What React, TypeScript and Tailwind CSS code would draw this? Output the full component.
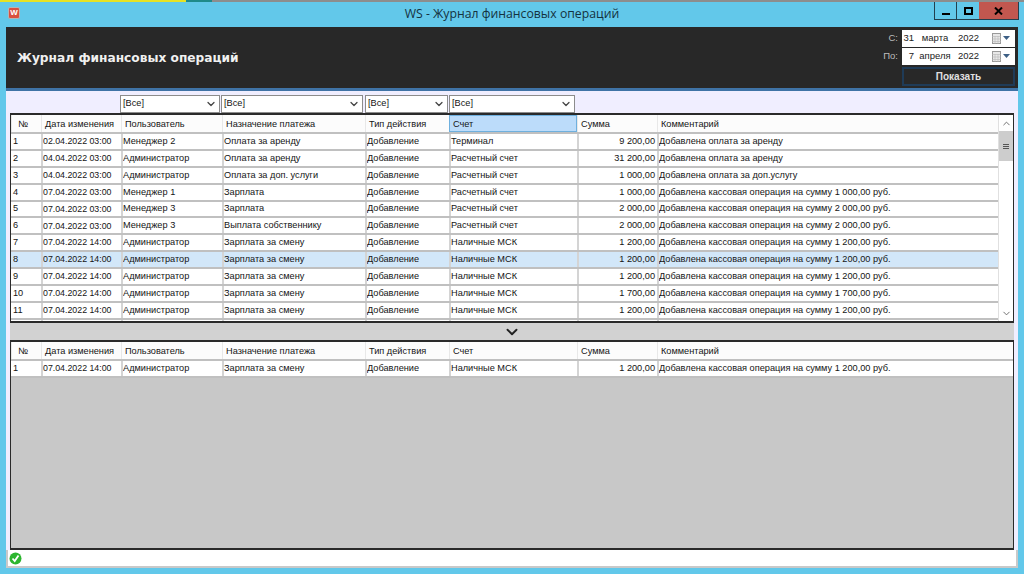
import { ChevronDown, ChevronUp } from "lucide-react";

const cols = "grid-cols-[30px_80px_101px_143px_84px_128px_80px_1fr]";
const headers = ["№", "Дата изменения", "Пользователь", "Назначение платежа", "Тип действия", "Счет", "Сумма", "Комментарий"];

const rows = [
  ["1", "02.04.2022 03:00", "Менеджер 2", "Оплата за аренду", "Добавление", "Терминал", "9 200,00", "Добавлена оплата за аренду"],
  ["2", "04.04.2022 03:00", "Администратор", "Оплата за аренду", "Добавление", "Расчетный счет", "31 200,00", "Добавлена оплата за аренду"],
  ["3", "04.04.2022 03:00", "Администратор", "Оплата за доп. услуги", "Добавление", "Расчетный счет", "1 000,00", "Добавлена оплата за доп.услугу"],
  ["4", "07.04.2022 03:00", "Менеджер 1", "Зарплата", "Добавление", "Расчетный счет", "1 000,00", "Добавлена кассовая операция на сумму 1 000,00 руб."],
  ["5", "07.04.2022 03:00", "Менеджер 3", "Зарплата", "Добавление", "Расчетный счет", "2 000,00", "Добавлена кассовая операция на сумму 2 000,00 руб."],
  ["6", "07.04.2022 03:00", "Менеджер 3", "Выплата собственнику", "Добавление", "Расчетный счет", "2 000,00", "Добавлена кассовая операция на сумму 2 000,00 руб."],
  ["7", "07.04.2022 14:00", "Администратор", "Зарплата за смену", "Добавление", "Наличные МСК", "1 200,00", "Добавлена кассовая операция на сумму 1 200,00 руб."],
  ["8", "07.04.2022 14:00", "Администратор", "Зарплата за смену", "Добавление", "Наличные МСК", "1 200,00", "Добавлена кассовая операция на сумму 1 200,00 руб."],
  ["9", "07.04.2022 14:00", "Администратор", "Зарплата за смену", "Добавление", "Наличные МСК", "1 200,00", "Добавлена кассовая операция на сумму 1 200,00 руб."],
  ["10", "07.04.2022 14:00", "Администратор", "Зарплата за смену", "Добавление", "Наличные МСК", "1 700,00", "Добавлена кассовая операция на сумму 1 700,00 руб."],
  ["11", "07.04.2022 14:00", "Администратор", "Зарплата за смену", "Добавление", "Наличные МСК", "1 200,00", "Добавлена кассовая операция на сумму 1 200,00 руб."],
];

function HeaderRow({ active }: { active?: boolean }) {
  return (
    <div className={`grid ${cols} h-[19px] shrink-0 bg-[#fcfcfc] border-b-2 border-[#c0c0c0]`}>
      {headers.map((h, i) => (
        <div
          key={h}
          className={`flex items-center pt-[2px] whitespace-nowrap overflow-hidden ${i === 0 ? "pl-[6px]" : "pl-[3px]"} ${
            active && i === 5 ? "bg-[#bcdcfa] border border-[#6fb0de]" : "border-l border-[#e8e8e8]"
          }`}
        >
          {h}
        </div>
      ))}
    </div>
  );
}

function Row({ cells, selected }: { cells: string[]; selected?: boolean }) {
  return (
    <div className={`grid ${cols} h-[16.9px] shrink-0 border-b-2 border-[#c0c0c0] ${selected ? "bg-[#d2e7f9]" : "bg-white"}`}>
      {cells.map((c, i) => (
        <div
          key={i}
          className={`flex items-center overflow-hidden whitespace-nowrap pr-[2px] ${i === 0 ? "pl-[2px]" : "border-l-2 border-[#d4d4d4]"} ${
            i === 6 ? "justify-end" : ""
          } ${i === 1 ? "text-[8.8px]" : ""}`}
        >
          {c}
        </div>
      ))}
    </div>
  );
}

function FilterSelect({ width, gap }: { width: string; gap: string }) {
  return (
    <div className={`flex items-center justify-between h-[18px] bg-white border border-[#8c8c8c] px-[2px] ${width} ${gap}`}>
      <span>[Все]</span>
      <ChevronDown size={12} strokeWidth={2.5} className="text-[#444]" />
    </div>
  );
}

function DateBox({ day, month }: { day: string; month: string }) {
  return (
    <div className="flex items-center h-[17px] w-[113px] bg-white text-[#222] text-[9.5px] pr-[5px]">
      <span className="w-[12px] text-right">{day}</span>
      <span className="w-[40px] text-center ml-[1px]">{month}</span>
      <span className="ml-[3px]">2022</span>
      <span className="ml-auto flex items-center gap-[2px]">
        <svg width="9" height="11" viewBox="0 0 9 11">
          <rect x="0.5" y="0.5" width="8" height="10" fill="#e8e8e8" stroke="#9a9a9a" />
          <path d="M0 3.5H9M0 6H9M0 8.5H9M3 3V11M6 3V11" stroke="#b5b5b5" strokeWidth="0.6" />
        </svg>
        <svg width="7" height="4" viewBox="0 0 7 4">
          <path d="M0 0H7L3.5 4Z" fill="#3d5f85" />
        </svg>
      </span>
    </div>
  );
}

export default function App() {
  return (
    <div className="w-[1024px] h-[574px] overflow-hidden flex flex-col bg-[#62c8ea] text-[9.2px] leading-none text-[#141414] font-['Liberation_Sans',sans-serif]">
      {/* desktop edge behind the window */}
      <div className="flex h-[2px] shrink-0 bg-[#8d8d8d]">
        <div className="w-[186px] bg-[#e6e224]" />
        <div className="w-[26px] bg-[#1f8a8a]" />
      </div>

      <div className="grid grid-cols-[1fr_auto_1fr] items-start h-[25px] shrink-0">
        <div className="ml-[8px] mt-[5px] w-[12px] h-[12px] rounded-[2px] bg-[#d9503f] border border-[#b5b5b5] flex items-center justify-center text-white text-[8px] font-bold">
          W
        </div>
        <div className="mt-[6px] text-[12.25px] text-[#14323f] font-['Open_Sans',sans-serif]">
          WS - Журнал финансовых операций
        </div>
        <div className="flex justify-self-end h-[18px] mr-[5px] border-x border-b border-[#22404f]">
          <div className="w-[22px] flex items-end justify-center pb-[4px] border-r border-[#22404f]">
            <div className="w-[8px] h-[2px] bg-black" />
          </div>
          <div className="w-[22px] flex items-center justify-center">
            <div className="w-[9px] h-[8px] border-2 border-black" />
          </div>
          <div className="w-[39px] bg-[#c2574f] flex items-center justify-center">
            <svg width="9" height="8" viewBox="0 0 9 8">
              <path d="M1 0.5L8 7.5M8 0.5L1 7.5" stroke="black" strokeWidth="2" />
            </svg>
          </div>
        </div>
      </div>

      <div className="mx-[6px] flex-1 flex flex-col min-h-0">
        <div className="h-[61px] shrink-0 bg-[#282828] flex justify-between text-[#bdbdbd] text-[9.5px]">
          <div className="pl-[11px] self-center mt-[1px] text-[12.2px] font-bold text-[#f0f0f0] font-['DejaVu_Sans',sans-serif]">
            Журнал финансовых операций
          </div>
          <div className="flex flex-col pt-[2px] pr-[3px]">
            <div className="flex items-center justify-end gap-[4px] h-[18px]">
              <span>С:</span>
              <DateBox day="31" month="марта" />
            </div>
            <div className="flex items-center justify-end gap-[4px] h-[18px]">
              <span>По:</span>
              <DateBox day="7" month="апреля" />
            </div>
            <div className="ml-auto mt-[2px] w-[113px] h-[19px] border-2 border-[#1f3b57] flex items-center justify-center text-[10px] font-bold text-[#e0e0e0]">
              Показать
            </div>
          </div>
        </div>
        <div className="h-[3px] shrink-0 bg-[#3f73a6]" />

        <div className="flex-1 min-h-0 flex flex-col bg-[#f0eeff]">
          <div className="flex h-[22px] shrink-0 pt-[4px] pl-[114px]">
            <FilterSelect width="w-[100px]" gap="mr-[1px]" />
            <FilterSelect width="w-[142px]" gap="mr-[2px]" />
            <FilterSelect width="w-[83px]" gap="mr-[1px]" />
            <FilterSelect width="w-[126px]" gap="" />
          </div>

          <div className="mx-[4px] h-[210px] shrink-0 flex border-2 border-x border-[#2a2a2a] bg-white overflow-hidden">
            <div className="flex-1 min-w-0 flex flex-col overflow-hidden">
              <HeaderRow active />
              {rows.map((r) => (
                <Row key={r[0]} cells={r} selected={r[0] === "8"} />
              ))}
              <Row cells={["", "", "", "", "", "", "", ""]} />
            </div>
            <div className="w-[15px] shrink-0 flex flex-col items-center bg-white border-l border-[#e0e0e0]">
              <div className="h-[16px] flex items-center justify-center">
                <ChevronUp size={11} strokeWidth={2} className="text-[#666]" />
              </div>
              <div className="h-[30px] w-full bg-[#cdcdcd] flex flex-col items-center justify-center gap-[1px]">
                <div className="w-[6px] h-px bg-[#555]" />
                <div className="w-[6px] h-px bg-[#555]" />
                <div className="w-[6px] h-px bg-[#555]" />
              </div>
              <div className="flex-1" />
              <div className="h-[16px] flex items-center justify-center">
                <ChevronDown size={11} strokeWidth={2} className="text-[#666]" />
              </div>
            </div>
          </div>

          <div className="h-[17px] shrink-0 mx-[4px] bg-[#d2d2d2] flex items-center justify-center">
            <ChevronDown size={18} strokeWidth={2.5} className="text-[#222]" />
          </div>

          <div className="mx-[4px] flex-1 min-h-0 flex flex-col border-2 border-x border-[#2a2a2a] bg-[#c8c8c8]">
            <HeaderRow />
            <Row cells={["1", ...rows[7].slice(1)]} />
          </div>

          <div className="h-[18px] shrink-0 bg-white border-2 border-[#c9c9c9] border-t-0 flex items-center pl-[1px]">
            <svg width="13" height="13" viewBox="0 0 13 13">
              <circle cx="6.5" cy="6.5" r="6" fill="#2cb52f" />
              <path d="M3.5 6.5L5.7 9L9.5 3.5" fill="none" stroke="white" strokeWidth="1.8" />
            </svg>
          </div>
        </div>
      </div>
      <div className="h-[6px] shrink-0" />
    </div>
  );
}
